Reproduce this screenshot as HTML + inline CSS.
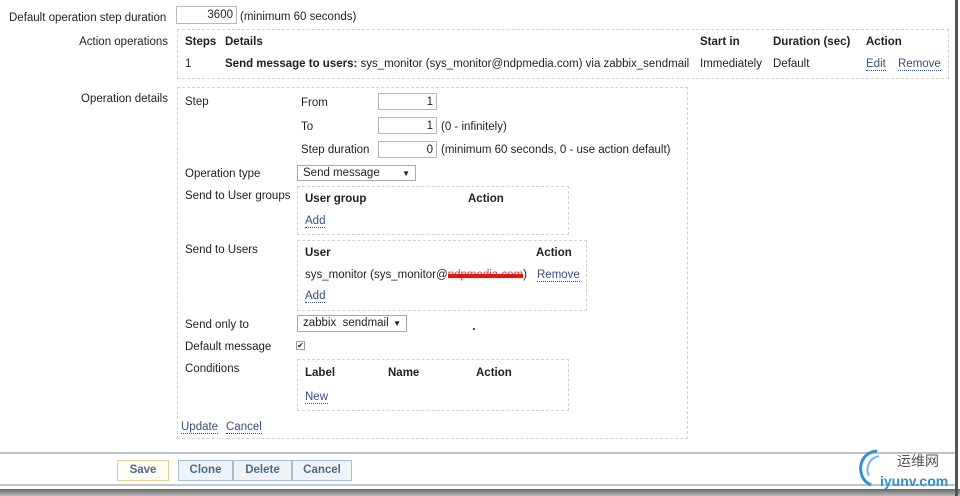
<!DOCTYPE html>
<html><head><meta charset="utf-8"><style>
body{margin:0;width:960px;height:496px;background:#fff;position:relative;overflow:hidden;font-family:"Liberation Sans",Arial,sans-serif;font-size:11.5px;color:#1f1f1f}
.a{position:absolute;white-space:nowrap;line-height:14px;margin-top:2px}
.r{text-align:right}
b{font-weight:bold}
.box{position:absolute;border:1px dashed #d2d2d2;box-sizing:border-box}
.inp{position:absolute;border:1px solid #b8b8b8;box-sizing:border-box;text-align:right;padding-right:3px;line-height:16px;background:#fff}
.sel{position:absolute;border:1px solid #a8a8a8;box-sizing:border-box;padding-left:5px;line-height:15px;background:#fff}
.lk{border-bottom:1px dotted #3a4f7a;color:#3a4f7a}
.btn{position:absolute;top:460px;height:21px;box-sizing:border-box;border:1px solid #a9bfd0;background:#eef3f7;color:#4d6a86;font-weight:bold;text-align:center;line-height:19px;font-size:11.5px}
</style></head><body>
<div class="a" style="left:9px;top:9px">Default operation step duration</div>
<div class="inp" style="left:176px;top:6px;width:61px;height:18px">3600</div>
<div class="a" style="left:240px;top:8px">(minimum 60 seconds)</div>

<div class="a r" style="right:792px;top:33px">Action operations</div>
<div class="box" style="left:177px;top:29px;width:772px;height:50px"></div>
<div class="a" style="left:185px;top:33px"><b>Steps</b></div>
<div class="a" style="left:225px;top:33px"><b>Details</b></div>
<div class="a" style="left:700px;top:33px"><b>Start in</b></div>
<div class="a" style="left:773px;top:33px"><b>Duration (sec)</b></div>
<div class="a" style="left:866px;top:33px"><b>Action</b></div>
<div class="a" style="left:185px;top:55px">1</div>
<div class="a" style="left:225px;top:55px"><b>Send message to users:</b> sys_monitor (sys_monitor@ndpmedia.com) via zabbix_sendmail</div>
<div class="a" style="left:700px;top:55px">Immediately</div>
<div class="a" style="left:773px;top:55px">Default</div>
<div class="a" style="left:866px;top:55px"><span class="lk">Edit</span></div>
<div class="a" style="left:898px;top:55px"><span class="lk">Remove</span></div>

<div class="a r" style="right:792px;top:90px">Operation details</div>
<div class="box" style="left:177px;top:87px;width:511px;height:352px"></div>
<div class="a" style="left:185px;top:93px">Step</div>
<div class="a" style="left:301px;top:94px">From</div>
<div class="inp" style="left:378px;top:93px;width:59px;height:17px">1</div>
<div class="a" style="left:301px;top:118px">To</div>
<div class="inp" style="left:378px;top:117px;width:59px;height:17px">1</div>
<div class="a" style="left:441px;top:118px">(0 - infinitely)</div>
<div class="a" style="left:301px;top:141px">Step duration</div>
<div class="inp" style="left:378px;top:141px;width:59px;height:17px">0</div>
<div class="a" style="left:441px;top:141px">(minimum 60 seconds, 0 - use action default)</div>

<div class="a" style="left:185px;top:165px">Operation type</div>
<div class="sel" style="left:297px;top:165px;width:119px;height:16px">Send message<span style="position:absolute;right:5px;font-size:8px">▼</span></div>

<div class="a" style="left:185px;top:187px">Send to User groups</div>
<div class="box" style="left:297px;top:186px;width:272px;height:49px"></div>
<div class="a" style="left:305px;top:190px"><b>User group</b></div>
<div class="a" style="left:468px;top:190px"><b>Action</b></div>
<div class="a" style="left:305px;top:212px"><span class="lk">Add</span></div>

<div class="a" style="left:185px;top:241px">Send to Users</div>
<div class="box" style="left:297px;top:240px;width:290px;height:71px"></div>
<div class="a" style="left:305px;top:244px"><b>User</b></div>
<div class="a" style="left:536px;top:244px"><b>Action</b></div>
<div class="a" style="left:305px;top:266px">sys_monitor (sys_monitor@<span style="position:relative;color:#d33">ndpmedia.com<span style="position:absolute;left:0;right:0;top:5px;height:4px;background:#e0161b"></span></span>)</div>
<div class="a" style="left:537px;top:266px"><span class="lk">Remove</span></div>
<div class="a" style="left:305px;top:287px"><span class="lk">Add</span></div>

<div class="a" style="left:185px;top:316px">Send only to</div>
<div class="sel" style="left:297px;top:315px;width:110px;height:17px">zabbix&nbsp; sendmail<span style="position:absolute;right:5px;font-size:8px">▼</span></div>
<div class="a" style="left:473px;top:328px;width:2px;height:2px;background:#555;margin:0"></div>

<div class="a" style="left:185px;top:338px">Default message</div>
<div class="a" style="left:296px;top:341px;width:9px;height:9px;border:1px solid #999;box-sizing:border-box;font-size:8px;line-height:8px;text-align:center;margin:0">✔</div>

<div class="a" style="left:185px;top:360px">Conditions</div>
<div class="box" style="left:297px;top:359px;width:272px;height:52px"></div>
<div class="a" style="left:305px;top:364px"><b>Label</b></div>
<div class="a" style="left:388px;top:364px"><b>Name</b></div>
<div class="a" style="left:476px;top:364px"><b>Action</b></div>
<div class="a" style="left:305px;top:388px"><span class="lk">New</span></div>

<div class="a" style="left:181px;top:418px"><span class="lk">Update</span></div>
<div class="a" style="left:226px;top:418px"><span class="lk">Cancel</span></div>

<div style="position:absolute;left:0;top:452px;width:956px;height:2px;background:#b9c2c9"></div>
<div class="btn" style="left:117px;width:52px;border-color:#e4cf9a;background:#fffdf4">Save</div>
<div class="btn" style="left:178px;width:55px">Clone</div>
<div class="btn" style="left:233px;width:59px">Delete</div>
<div class="btn" style="left:292px;width:60px">Cancel</div>
<div style="position:absolute;left:0;top:484px;width:956px;height:2px;background:#c0c8ce"></div>
<div style="position:absolute;left:0;top:489px;width:960px;height:7px;background:linear-gradient(#666,#bbb)"></div>
<div style="position:absolute;left:955px;top:0;width:3px;height:496px;background:#555"></div>

<svg style="position:absolute;left:855px;top:448px" width="40" height="40"><path d="M22 3 C8 4 2 18 8 30 C10 34 14 36 16 37" stroke="#2f8fd2" stroke-width="3" fill="none"/><path d="M24 8 C14 10 10 20 14 28" stroke="#79b8e6" stroke-width="2" fill="none"/></svg>
<div class="a" style="left:897px;top:452px;font-family:'Noto Sans CJK SC',sans-serif;font-size:14px;color:#555;line-height:18px;margin:0">运维网</div>
<div class="a" style="left:880px;top:472px;font-size:14px;font-weight:bold;color:#2f8fd2;line-height:18px;margin:0">iyunv.com</div>
</body></html>
